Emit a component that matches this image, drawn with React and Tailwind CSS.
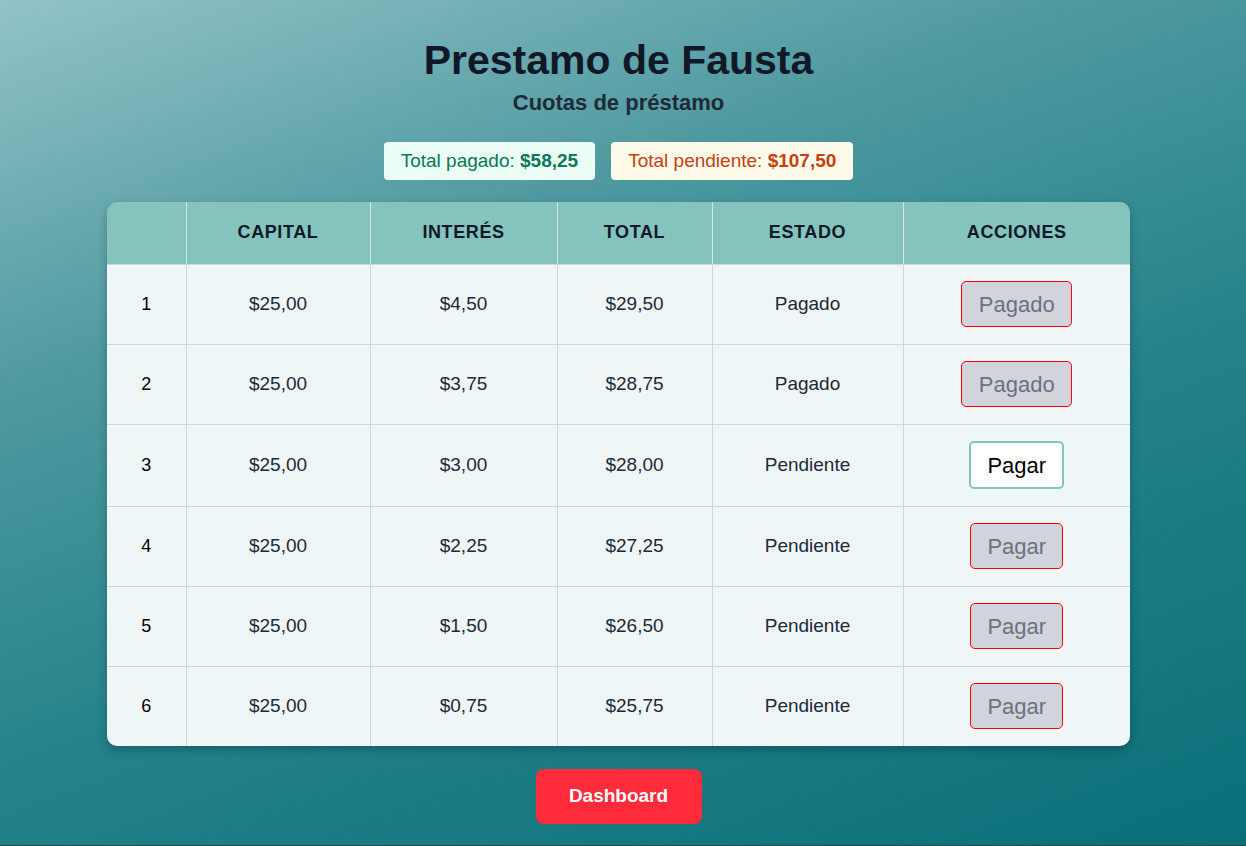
import React from "react";

const cuotas = [
  { n: 1, capital: "$25,00", interes: "$4,50", total: "$29,50", estado: "Pagado" },
  { n: 2, capital: "$25,00", interes: "$3,75", total: "$28,75", estado: "Pagado" },
  { n: 3, capital: "$25,00", interes: "$3,00", total: "$28,00", estado: "Pendiente", next: true },
  { n: 4, capital: "$25,00", interes: "$2,25", total: "$27,25", estado: "Pendiente" },
  { n: 5, capital: "$25,00", interes: "$1,50", total: "$26,50", estado: "Pendiente" },
  { n: 6, capital: "$25,00", interes: "$0,75", total: "$25,75", estado: "Pendiente" },
];

const ActionButton = ({ cuota }) => {
  if (cuota.estado === "Pagado") {
    return (
      <button
        disabled
        className="h-[46px] w-[111px] rounded-[5px] border border-[#ff0000] bg-[#d1d5db] text-[22px] text-[#6b7280]"
      >
        Pagado
      </button>
    );
  }
  if (cuota.next) {
    return (
      <button className="h-[48px] w-[95px] rounded-[5px] border-2 border-[#85c4bd] bg-white text-[22px] text-black">
        Pagar
      </button>
    );
  }
  return (
    <button
      disabled
      className="h-[46px] w-[93px] rounded-[5px] border border-[#ff0000] bg-[#d1d5db] text-[22px] text-[#6b7280]"
    >
      Pagar
    </button>
  );
};

export default function App() {
  return (
    <div className="h-[846px] border-b border-[#1b4d53] bg-[linear-gradient(160deg,#92c3c8_0%,#4f9aa0_30%,#24828a_60%,#0a6f79_100%)] font-['Liberation_Sans',Arial,sans-serif] flex flex-col items-center pt-[36px] pr-[9px]">
      <h1 className="text-[41px] leading-[48px] font-bold text-[#111827]">Prestamo de Fausta</h1>
      <h2 className="mt-[6px] text-[22px] leading-[26px] font-bold text-[#1f2937]">Cuotas de préstamo</h2>

      <div className="mt-[26px] flex gap-4">
        <div className="h-[38px] px-[17px] flex items-center rounded-[4px] bg-[#ecfdf5] text-[#047857] text-[19px]">
          Total pagado:&nbsp;<span className="font-bold">$58,25</span>
        </div>
        <div className="h-[38px] px-[17px] flex items-center rounded-[4px] bg-[#fffbeb] text-[#c2410c] text-[19px]">
          Total pendiente:&nbsp;<span className="font-bold">$107,50</span>
        </div>
      </div>

      <div className="mt-[22px] w-[1023px] overflow-hidden rounded-[10px] shadow-[0_4px_10px_rgba(0,0,0,0.25)]">
        <table className="w-full border-collapse table-fixed text-center">
          <colgroup>
            <col className="w-[79px]" />
            <col className="w-[184px]" />
            <col className="w-[187px]" />
            <col className="w-[155px]" />
            <col className="w-[191px]" />
            <col />
          </colgroup>
          <thead>
            <tr className="h-[62px] bg-[#85c4bd] text-[#111827] text-[18px] font-bold uppercase tracking-[0.6px]">
              <th className="border-r border-[#d1e7e4]"></th>
              <th className="border-r border-[#d1e7e4]">Capital</th>
              <th className="border-r border-[#d1e7e4]">Interés</th>
              <th className="border-r border-[#d1e7e4]">Total</th>
              <th className="border-r border-[#d1e7e4]">Estado</th>
              <th>Acciones</th>
            </tr>
          </thead>
          <tbody className="bg-[#eef6f8] text-[19px] text-[#1f2937]">
            {cuotas.map((c) => (
              <tr key={c.n} className={`border-t border-[#d1d5db] ${c.next ? "h-[82px]" : "h-[80px]"}`}>
                <td className="border-r border-[#d1d5db] text-[18px] text-black">{c.n}</td>
                <td className="border-r border-[#d1d5db]">{c.capital}</td>
                <td className="border-r border-[#d1d5db]">{c.interes}</td>
                <td className="border-r border-[#d1d5db]">{c.total}</td>
                <td className="border-r border-[#d1d5db]">{c.estado}</td>
                <td>
                  <ActionButton cuota={c} />
                </td>
              </tr>
            ))}
          </tbody>
        </table>
      </div>

      <button className="mt-[23px] h-[55px] w-[166px] rounded-[8px] bg-[#ff2a3a] text-white text-[19px] font-bold">
        Dashboard
      </button>
    </div>
  );
}
